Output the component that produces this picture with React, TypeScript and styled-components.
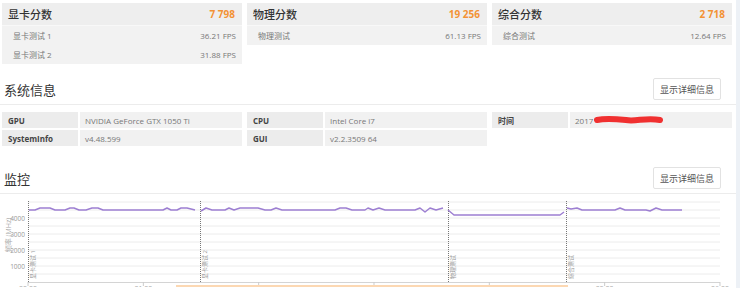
import * as React from 'react';
import styled, { createGlobalStyle } from 'styled-components';

const GlobalStyle = createGlobalStyle`
    html, body {
        margin: 0;
        padding: 0;
        background: #fff;
        font-family: "Open Sans", "Noto Sans CJK SC", sans-serif;
        overflow: hidden;
    }
`;

type ScoreCard = {
    title: string;
    score: string;
    rows: { name: string; value: string }[];
};

const cards: ScoreCard[] = [
    {
        title: '显卡分数',
        score: '7 798',
        rows: [
            { name: '显卡测试 1', value: '36.21 FPS' },
            { name: '显卡测试 2', value: '31.88 FPS' },
        ],
    },
    {
        title: '物理分数',
        score: '19 256',
        rows: [{ name: '物理测试', value: '61.13 FPS' }],
    },
    {
        title: '综合分数',
        score: '2 718',
        rows: [{ name: '综合测试', value: '12.64 FPS' }],
    },
];

const infoGroups = [
    [
        { label: 'GPU', value: 'NVIDIA GeForce GTX 1050 Ti' },
        { label: 'SystemInfo', value: 'v4.48.599' },
    ],
    [
        { label: 'CPU', value: 'Intel Core i7' },
        { label: 'GUI', value: 'v2.2.3509 64' },
    ],
    [{ label: '时间', value: '2017', redacted: true }],
];

const Root = styled.div`
    display: flex;
    width: 740px;
    height: 288px;
    overflow: hidden;
`;

const Main = styled.div`
    flex: 1;
    padding: 3px 0 0 2px;
`;

const Scrollbar = styled.div`
    width: 4px;
    background: #edf1f6;
`;

const Grid = styled.div`
    display: grid;
    grid-template-columns: repeat(3, 240px);
    column-gap: 5px;
    align-items: start;
`;

const Card = styled.div`
    background: #f2f2f2;
`;

const CardHeader = styled.div`
    height: 22px;
    display: flex;
    align-items: center;
    justify-content: space-between;
    padding: 0 7px 0 6px;
    background: #eeeeee;
    border-bottom: 1px solid #f8f8f8;
`;

const CardTitle = styled.span`
    font-size: 11px;
    font-weight: 500;
    color: #333;
`;

const Score = styled.span`
    font-size: 10px;
    font-weight: 700;
    color: #f39235;
`;

const CardRow = styled.div`
    height: 19px;
    display: flex;
    align-items: center;
    justify-content: space-between;
    padding: 0 6px 0 11px;
    font-size: 8px;
    color: #777;
`;

const Section = styled.div<{ $top: number }>`
    margin-top: ${(p) => p.$top}px;
    margin-left: -2px;
    display: flex;
    align-items: center;
    justify-content: space-between;
    padding: 0 15px 4px 4px;
    border-bottom: 1px solid #ececec;
`;

const Heading = styled.h2`
    margin: 0;
    font-family: "Noto Sans CJK SC", sans-serif;
    font-size: 13px;
    font-weight: 400;
    color: #333;
`;

const DetailButton = styled.button`
    width: 68px;
    height: 22px;
    padding: 0;
    background: #fff;
    border: 1px solid #e2e2e2;
    border-radius: 2px;
    font-family: "Noto Sans CJK SC", sans-serif;
    font-size: 9px;
    color: #555;
`;

const InfoGrid = styled(Grid)`
    margin-top: 7px;
`;

const InfoGroup = styled.div`
    display: grid;
    grid-template-columns: 76px 1fr;
    gap: 2px;
`;

const InfoLabel = styled.div`
    height: 16px;
    display: flex;
    align-items: center;
    padding-left: 6px;
    background: #ececec;
    font-size: 8px;
    font-weight: 700;
    color: #444;
`;

const InfoValue = styled.div`
    height: 16px;
    display: flex;
    align-items: center;
    padding-left: 5px;
    background: #f1f1f1;
    font-size: 8px;
    color: #777;
`;

const ChartWrap = styled.div`
    margin-left: -2px;
    height: 93px;
`;

const Y = (y: number) => y - 195;

const seg1 = [
    [29, 211], [35, 211], [40, 209], [50, 209], [55, 211], [65, 211], [70, 209], [74, 209], [79, 211],
    [86, 211], [92, 209], [98, 209], [103, 211], [163, 211], [167, 209], [171, 211], [177, 211],
    [181, 209], [187, 209], [195, 211],
];
const seg2 = [
    [201, 212], [206, 209], [212, 211], [225, 211], [229, 209], [234, 211], [240, 209], [258, 209],
    [265, 211], [271, 211], [276, 209], [282, 211], [335, 211], [340, 209], [346, 209], [352, 211],
    [365, 211], [368, 209], [373, 211], [379, 209], [385, 211], [415, 211], [420, 209], [425, 213],
    [430, 209], [436, 211], [443, 209],
];
const seg3 = [[448, 211], [454, 216], [520, 216], [560, 216], [564, 213]];
const seg4 = [
    [567, 209], [571, 210], [577, 209], [582, 211], [615, 211], [620, 209], [625, 211], [646, 211],
    [650, 212], [656, 209], [662, 211], [682, 211],
];

const pts = (s: number[][]) => s.map(([x, y]) => `${x},${Y(y)}`).join(' ');

const markers = [
    { x: 28, label: '显卡测试 1' },
    { x: 200, label: '显卡测试 2' },
    { x: 448, label: '物理测试' },
    { x: 566, label: '综合测试' },
];

const Chart: React.FC = () => {
    const gridYs = Array.from({ length: 10 }, (_, i) => 283 - (i + 1) * 8);
    const ticks = Array.from({ length: 7 }, (_, i) => 28 + i * 115.33);
    return (
        <svg width={736} height={93} style={{ display: 'block' }}>
            {gridYs.map((y) => (
                <line key={y} x1={28} x2={720} y1={Y(y)} y2={Y(y)} stroke="#ececec" strokeWidth={1} />
            ))}
            <line x1={28} x2={720} y1={Y(283.5)} y2={Y(283.5)} stroke="#d4d4d4" />
            {ticks.map((x, i) => (
                <g key={x}>
                    <line x1={x} x2={x} y1={Y(283)} y2={Y(287)} stroke="#ccc" />
                    <text x={x} y={Y(292)} fontSize={7} fill="#aaa" textAnchor="middle" fontFamily="Open Sans">
                        {`0${i}:00`}
                    </text>
                </g>
            ))}
            {[1000, 2000, 3000, 4000].map((v) => (
                <text key={v} x={25} y={Y(283 - v / 62.5 + 2.5)} fontSize={6.5} fill="#999" textAnchor="end" fontFamily="Open Sans">
                    {v}
                </text>
            ))}
            <text
                transform={`translate(11, ${Y(236)}) rotate(-90)`}
                fontSize={7}
                fill="#aaa"
                textAnchor="middle"
                fontFamily="Open Sans, Noto Sans CJK SC"
            >
                频率 (MHz)
            </text>
            <rect x={176} y={Y(286)} width={392} height={6} fill="#fcd8b3" />
            {markers.map((m) => (
                <g key={m.x}>
                    <line x1={m.x + 0.5} x2={m.x + 0.5} y1={Y(202)} y2={Y(284)} stroke="#777" strokeDasharray="1 1" />
                    <text
                        transform={`translate(${m.x + 7}, ${Y(280)}) rotate(-90)`}
                        fontSize={6}
                        fill="#999"
                        fontFamily="Open Sans, Noto Sans CJK SC"
                    >
                        {m.label}
                    </text>
                </g>
            ))}
            {[seg1, seg2, seg3, seg4].map((s, i) => (
                <polyline key={i} points={pts(s)} fill="none" stroke="#9d7fd2" strokeWidth={1.5} strokeLinejoin="round" />
            ))}
        </svg>
    );
};

const Redaction: React.FC = () => (
    <svg width={70} height={12} style={{ marginLeft: 1 }}>
        <path d="M3 6 C 12 4, 22 5, 32 6 C 42 8, 52 3, 66 6" stroke="#f03030" strokeWidth={6} strokeLinecap="round" fill="none" />
    </svg>
);

const App: React.FC = () => {
    return (
        <Root>
            <GlobalStyle />
            <Main>
                <Grid>
                    {cards.map((c) => (
                        <Card key={c.title}>
                            <CardHeader>
                                <CardTitle>{c.title}</CardTitle>
                                <Score>{c.score}</Score>
                            </CardHeader>
                            {c.rows.map((r) => (
                                <CardRow key={r.name}>
                                    <span>{r.name}</span>
                                    <span>{r.value}</span>
                                </CardRow>
                            ))}
                        </Card>
                    ))}
                </Grid>
                <Section $top={14}>
                    <Heading>系统信息</Heading>
                    <DetailButton>显示详细信息</DetailButton>
                </Section>
                <InfoGrid>
                    {infoGroups.map((g, i) => (
                        <InfoGroup key={i}>
                            {g.map((row) => (
                                <React.Fragment key={row.label}>
                                    <InfoLabel>{row.label}</InfoLabel>
                                    <InfoValue>
                                        {row.value}
                                        {'redacted' in row && row.redacted ? <Redaction /> : null}
                                    </InfoValue>
                                </React.Fragment>
                            ))}
                        </InfoGroup>
                    ))}
                </InfoGrid>
                <Section $top={21}>
                    <Heading>监控</Heading>
                    <DetailButton>显示详细信息</DetailButton>
                </Section>
                <ChartWrap>
                    <Chart />
                </ChartWrap>
            </Main>
            <Scrollbar />
        </Root>
    );
};

export default App;
